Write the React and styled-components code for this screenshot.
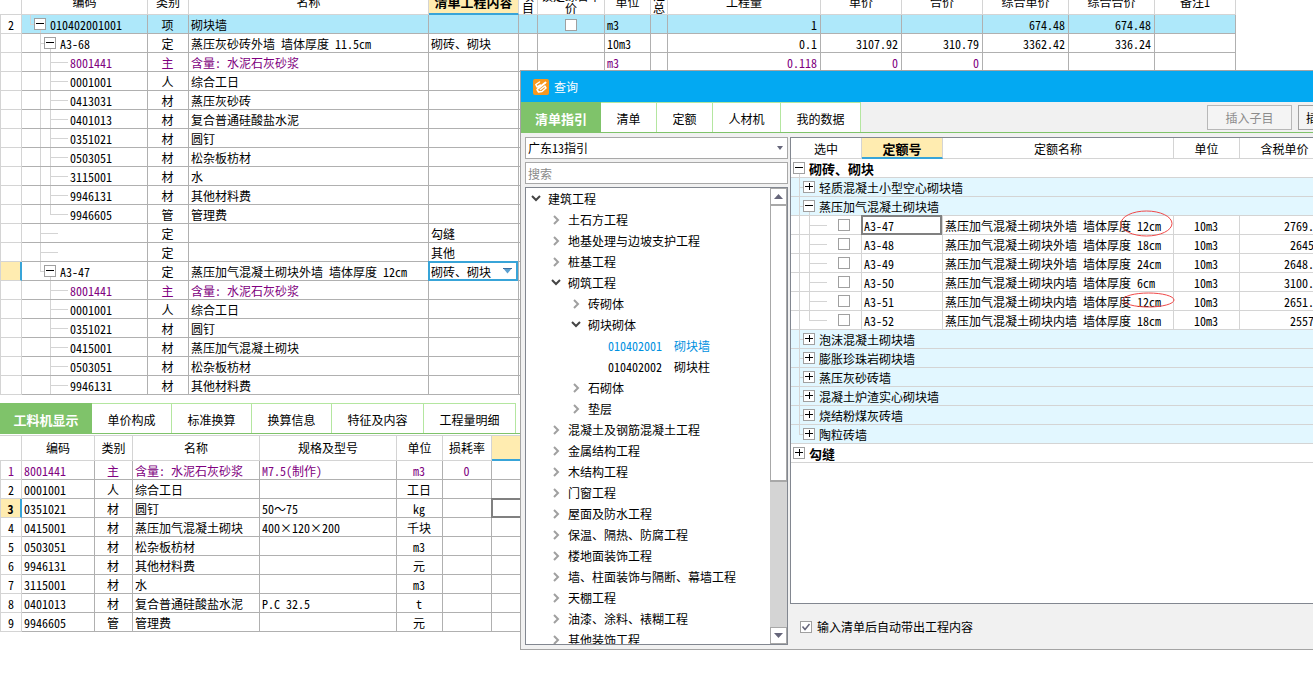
import React from "react";
import styled, { createGlobalStyle, css } from "styled-components";

const GlobalStyle = createGlobalStyle`
  * { box-sizing: border-box; }
  body {
    margin: 0;
    background: #fff;
    color: #000;
    font: 12px/18px "Noto Sans Mono CJK SC", "Noto Sans CJK SC", sans-serif;
  }
  button, input, select { font: inherit; color: inherit; margin: 0; border-radius: 0; }
  ul { list-style: none; margin: 0; padding: 0; }
`;

const C = {
  line: "#b0b0b0",
  soft: "#d4d4d4",
  frame: "#828790",
  purple: "#800080",
  green: "#7fc36a",
  lightGreen: "#b4e6a0",
  accent: "#38a4d8",
  yellow: "#ffecb0",
  selected: "#aee8fa",
};

const Page = styled.main`
  position: relative;
  min-height: 100vh;
  overflow: hidden;
`;

/* ---------- grids ---------- */

const Scroller = styled.div`
  overflow: hidden;
`;

const Grid = styled.table`
  table-layout: fixed;
  border-collapse: separate;
  border-spacing: 0;
  width: ${(p) => (p.$fill ? "100%" : "0")};
  margin-top: ${(p) => p.$scrolled || 0}px;
`;

const Th = styled.th`
  height: ${(p) => p.$h}px;
  padding: ${(p) => p.$top || 0}px 0 0;
  font-weight: ${(p) => (p.$active ? 700 : 400)};
  font-size: ${(p) => (p.$active ? 13 : 12)}px;
  line-height: 12px;
  text-align: center;
  white-space: pre;
  background: ${(p) => (p.$active ? C.yellow : "#fff")};
  border-right: 1px solid ${C.soft};
  border-bottom: ${(p) => (p.$active ? `2px solid ${C.accent}` : `1px solid ${C.soft}`)};
`;

const Tr = styled.tr`
  color: ${(p) => (p.$purple ? C.purple : "#000")};
  background: ${(p) => p.$bg || "#fff"};
`;

const Td = styled.td`
  height: 19px;
  padding: 2px 3px 0 2px;
  overflow: ${(p) => (p.$open ? "visible" : "hidden")};
  white-space: pre;
  line-height: 16px;
  text-align: ${(p) => p.$align || "left"};
  border-right: 1px solid ${(p) => (p.$soft ? C.soft : C.line)};
  border-bottom: 1px solid ${(p) => (p.$soft ? C.soft : C.line)};
`;

const FlatTd = styled(Td)`
  padding: 0;
  overflow: visible;
`;

const TreeTd = styled(Td)`
  padding: 0;
`;

const RowNo = styled.td`
  height: 19px;
  padding: 2px 0 0;
  text-align: center;
  line-height: 16px;
  background: ${(p) => (p.$current ? C.yellow : "#fff")};
  font-weight: ${(p) => (p.$current ? 700 : 400)};
  border-left: 1px solid ${C.soft};
  border-bottom: 1px solid ${C.soft};
  border-right: ${(p) => (p.$current ? `2px solid ${C.accent}` : `1px solid ${C.soft}`)};
`;

const FocusCell = styled.div`
  height: 20px;
  margin: -1px 0 -1px -1px;
  padding: 1px 0 0 1px;
  line-height: 16px;
  border: 2px solid #808080;
`;

/* ---------- tree drawing inside cells ---------- */

const Branch = styled.div`
  display: flex;
  align-items: center;
  height: 18px;
  padding-left: ${(p) => p.$pad}px;
  font-weight: ${(p) => (p.$bold ? 700 : 400)};
  font-size: ${(p) => (p.$bold ? 13 : 12)}px;
`;

const Guide = styled.span`
  position: relative;
  flex: none;
  align-self: stretch;
  width: ${(p) => p.$w}px;
  &::before {
    content: "";
    position: absolute;
    left: 0;
    top: 0;
    height: ${(p) => (p.$kind === "end" ? 9 : 19)}px;
    border-left: ${(p) => (p.$kind === "none" ? 0 : 1)}px solid ${C.soft};
  }
  ${(p) =>
    (p.$kind === "tee" || p.$kind === "end") &&
    css`
      &::after {
        content: "";
        position: absolute;
        left: 0;
        right: 0;
        top: 9px;
        border-top: 1px solid ${C.soft};
      }
    `}
`;

const Toggle = styled.button`
  position: relative;
  flex: none;
  display: block;
  width: 12px;
  height: 12px;
  padding: 0;
  background: #fff;
  border: 1px solid #a0a0a0;
  &::before {
    content: "";
    position: absolute;
    left: 1px;
    right: 1px;
    top: 4px;
    height: 1px;
    background: #000;
  }
  &::after {
    content: "";
    position: absolute;
    ${(p) =>
      p.$open
        ? css`
            left: 5px;
            top: 11px;
            width: 1px;
            height: 4px;
            background: ${C.soft};
          `
        : css`
            left: 5px;
            top: 1px;
            width: 1px;
            height: 7px;
            background: #000;
          `}
  }
`;

const Label = styled.span`
  margin-left: ${(p) => p.$gap}px;
  padding-top: 2px;
  line-height: 16px;
  white-space: pre;
`;

const Tick = styled.input`
  appearance: none;
  display: ${(p) => (p.$center ? "block" : "inline-block")};
  flex: none;
  width: 12px;
  height: 12px;
  margin: ${(p) => (p.$center ? "0 auto" : `0 0 0 ${p.$left || 0}px`)};
  background: #fff;
  border: 1px solid #a0a0a0;
  &:checked {
    background: #fff url("data:image/svg+xml,%3Csvg xmlns='http://www.w3.org/2000/svg' viewBox='0 0 10 10'%3E%3Cpath d='M1.5 4.5l2.5 3 4.500-5.500' fill='none' stroke='%2366667a' stroke-width='1.500'/%3E%3C/svg%3E") center / 10px 10px no-repeat;
  }
`;

const CellSelectBox = styled.div`
  position: relative;
  margin: -1px 0 -1px -1px;
`;

const CellSelect = styled.select`
  appearance: none;
  display: block;
  width: 100%;
  height: 20px;
  padding: 1px 0 0 1px;
  line-height: 15px;
  background: #fff;
  border: 2px solid ${C.accent};
`;

const DropMark = styled.svg`
  position: absolute;
  right: ${(p) => p.$right}px;
  top: ${(p) => p.$top}px;
  pointer-events: none;
`;

/* ---------- tabs ---------- */

const TabBar = styled.div`
  display: flex;
  height: 31px;
  background: ${(p) => p.$bg || "#fff"};
  border-bottom: 1px solid ${C.green};
`;

const Tab = styled.button`
  flex: none;
  width: ${(p) => p.$w}px;
  padding: 2px 0 0;
  background: ${(p) => (p.$active ? C.green : "#fff")};
  color: ${(p) => (p.$active ? "#fff" : "#000")};
  font-size: ${(p) => (p.$active ? 13 : 12)}px;
  font-weight: ${(p) => (p.$active ? 700 : 400)};
  border: 0 solid ${(p) => (p.$active ? C.green : C.lightGreen)};
  border-width: 1px ${(p) => (p.$active ? 0 : 1)}px 0 0;
`;

/* ---------- lower panel ---------- */

const Lower = styled.section`
  margin-top: 8px;
`;

const LowerGrid = styled.div`
  margin-top: 1px;
  border-top: 1px solid ${C.soft};
`;

/* ---------- query window ---------- */

const Window = styled.section`
  position: absolute;
  left: 520px;
  right: 0;
  top: 70px;
  height: 580px;
  display: flex;
  flex-direction: column;
  overflow: hidden;
  background: #f1f1f1;
  border: 1px solid #a4a4a4;
  border-right: 0;
`;

const TitleBar = styled.header`
  display: flex;
  align-items: center;
  gap: 5px;
  flex: none;
  height: 31px;
  padding-left: 12px;
  background: #03a9f2;
  color: #fff;
`;

const Title = styled.h1`
  margin: 0;
  font-size: 12px;
  font-weight: 400;
`;

const Actions = styled.div`
  display: flex;
  align-items: center;
  gap: 6px;
  width: 106px;
  margin-left: auto;
  padding-top: 1px;
`;

const Action = styled.button`
  flex: none;
  width: ${(p) => p.$w}px;
  height: 25px;
  padding: 0;
  background: #f4f4f4;
  color: ${(p) => (p.disabled ? "#8c8c8c" : "#000")};
  border: 1px solid ${(p) => (p.disabled ? "#b8b8b8" : "#a0a0a0")};
`;

const Body = styled.div`
  flex: 1;
  min-height: 0;
  display: grid;
  grid-template-columns: 263px minmax(0, 1fr);
  gap: 2px;
  padding: 4px 0 4px 4px;
`;

const Side = styled.div`
  display: flex;
  flex-direction: column;
  gap: 3px;
  min-height: 0;
`;

const GuideSelectBox = styled.div`
  position: relative;
`;

const GuideSelect = styled.select`
  appearance: none;
  display: block;
  width: 100%;
  height: 22px;
  padding: 0 2px;
  background: #fff;
  border: 1px solid #a8a8a8;
`;

const Search = styled.input`
  display: block;
  width: 100%;
  height: 22px;
  padding: 0 2px;
  background: #fff;
  border: 1px solid #a8a8a8;
  &::placeholder { color: #8a8a8a; opacity: 1; }
`;

const TreeBox = styled.div`
  flex: 1;
  min-height: 0;
  display: flex;
  background: #fff;
  border: 1px solid ${C.frame};
`;

const TreeList = styled.ul`
  flex: 1;
  overflow: hidden;
`;

const TreeItem = styled.li`
  display: flex;
  align-items: center;
  gap: 6px;
  height: 21px;
  padding-left: ${(p) => 4 + p.$level * 20}px;
  color: ${(p) => (p.$selected ? "#0090e0" : "#000")};
  white-space: pre;
`;

const ScrollBar = styled.div`
  flex: none;
  display: flex;
  flex-direction: column;
  width: 17px;
  background: #d4d4d4;
`;

const ScrollButton = styled.button`
  display: flex;
  align-items: center;
  justify-content: center;
  height: 17px;
  padding: 0;
  background: #fff;
  border: 1px solid #a8a8a8;
`;

const Thumb = styled.div`
  flex: none;
  height: 277px;
  margin-bottom: auto;
  background: #fff;
  border: 1px solid #a8a8a8;
  border-bottom-width: 2px;
`;

const Main = styled.div`
  display: flex;
  flex-direction: column;
  min-width: 0;
`;

const Sheet = styled.div`
  flex: 1;
  overflow: hidden;
  background: #fff;
  border: 1px solid ${C.frame};
  border-right: 0;
`;

const Footer = styled.label`
  display: flex;
  align-items: center;
  gap: 5px;
  height: 41px;
  padding: 5px 0 0 10px;
`;

const Marked = styled.span`
  position: relative;
`;

const Ring = styled.svg`
  position: absolute;
  left: ${(p) => p.$left}px;
  top: ${(p) => p.$top}px;
  overflow: visible;
  pointer-events: none;
`;

/* ---------- data ---------- */

const L3 = (kind, outer = "line") => [[outer, 10], [kind, 18]];

const items = [
  { no: "2", code: "010402001001", pad: 8, guides: [["end", 4]], open: true, type: "项", name: "砌块墙", check: true, unit: "m3", nums: ["1", "", "", "674.48", "674.48"], bg: C.selected },
  { code: "A3-68", pad: 18, guides: [["tee", 4]], open: true, type: "定", name: "蒸压灰砂砖外墙 墙体厚度 11.5cm", content: "砌砖、砌块", unit: "10m3", nums: ["0.1", "3107.92", "310.79", "3362.42", "336.24"] },
  { code: "8001441", type: "主", name: "含量: 水泥石灰砂浆", unit: "m3", nums: ["0.118", "0", "0"], purple: true },
  { code: "0001001", type: "人", name: "综合工日" },
  { code: "0413031", type: "材", name: "蒸压灰砂砖" },
  { code: "0401013", type: "材", name: "复合普通硅酸盐水泥" },
  { code: "0351021", type: "材", name: "圆钉" },
  { code: "0503051", type: "材", name: "松杂板枋材" },
  { code: "3115001", type: "材", name: "水" },
  { code: "9946131", type: "材", name: "其他材料费" },
  { code: "9946605", guides: L3("end"), type: "管", name: "管理费" },
  { code: "", guides: [["tee", 18]], type: "定", name: "", content: "勾缝" },
  { code: "", guides: [["tee", 18]], type: "定", name: "", content: "其他" },
  { code: "A3-47", pad: 18, guides: [["end", 4]], open: true, type: "定", name: "蒸压加气混凝土砌块外墙 墙体厚度 12cm", content: "砌砖、砌块", current: true },
  { code: "8001441", guides: L3("tee", "none"), type: "主", name: "含量: 水泥石灰砂浆", purple: true },
  { code: "0001001", guides: L3("tee", "none"), type: "人", name: "综合工日" },
  { code: "0351021", guides: L3("tee", "none"), type: "材", name: "圆钉" },
  { code: "0415001", guides: L3("tee", "none"), type: "材", name: "蒸压加气混凝土砌块" },
  { code: "0503051", guides: L3("tee", "none"), type: "材", name: "松杂板枋材" },
  { code: "9946131", guides: L3("tee", "none"), type: "材", name: "其他材料费" },
];

const itemCols = [
  ["", 22], ["编码", 126], ["类别", 41], ["名称", 240], ["清单工程内容", 90],
  ["项\n目", 19], ["锁定综合单\n价", 67], ["单位", 46], ["汇\n总", 17], ["工程量", 153],
  ["单价", 81], ["合价", 81], ["综合单价", 86], ["综合合价", 86], ["备注1", 81],
];

const resources = [
  ["8001441", "主", "含量: 水泥石灰砂浆", "M7.5(制作)", "m3", "0"],
  ["0001001", "人", "综合工日", "", "工日", ""],
  ["0351021", "材", "圆钉", "50～75", "kg", ""],
  ["0415001", "材", "蒸压加气混凝土砌块", "400×120×200", "千块", ""],
  ["0503051", "材", "松杂板枋材", "", "m3", ""],
  ["9946131", "材", "其他材料费", "", "元", ""],
  ["3115001", "材", "水", "", "m3", ""],
  ["0401013", "材", "复合普通硅酸盐水泥", "P.C 32.5", "t", ""],
  ["9946605", "管", "管理费", "", "元", ""],
];

const resourceCols = [
  ["", 22], ["编码", 73], ["类别", 38], ["名称", 127], ["规格及型号", 137], ["单位", 46], ["损耗率", 49], ["", null],
];

const tree = [
  [0, "建筑工程", "open"],
  [1, "土石方工程"],
  [1, "地基处理与边坡支护工程"],
  [1, "桩基工程"],
  [1, "砌筑工程", "open"],
  [2, "砖砌体"],
  [2, "砌块砌体", "open"],
  [3, "010402001  砌块墙", "leaf", true],
  [3, "010402002  砌块柱", "leaf"],
  [2, "石砌体"],
  [2, "垫层"],
  [1, "混凝土及钢筋混凝土工程"],
  [1, "金属结构工程"],
  [1, "木结构工程"],
  [1, "门窗工程"],
  [1, "屋面及防水工程"],
  [1, "保温、隔热、防腐工程"],
  [1, "楼地面装饰工程"],
  [1, "墙、柱面装饰与隔断、幕墙工程"],
  [1, "天棚工程"],
  [1, "油漆、涂料、裱糊工程"],
  [1, "其他装饰工程"],
];

const quotaCols = [["选中", 71], ["定额号", 81], ["定额名称", 231], ["单位", 66], ["含税单价", 90]];

const quotas = [
  ["A3-47", "蒸压加气混凝土砌块外墙 墙体厚度 ", "12cm", "2769.24", { left: -16, top: -6, w: 51, h: 25 }],
  ["A3-48", "蒸压加气混凝土砌块外墙 墙体厚度 ", "18cm", "2645.1"],
  ["A3-49", "蒸压加气混凝土砌块外墙 墙体厚度 ", "24cm", "2648.32"],
  ["A3-50", "蒸压加气混凝土砌块内墙 墙体厚度 ", "6cm", "3100.45"],
  ["A3-51", "蒸压加气混凝土砌块内墙 墙体厚度 ", "12cm", "2651.18", { left: -14, top: 0, w: 51, h: 14 }],
  ["A3-52", "蒸压加气混凝土砌块内墙 墙体厚度 ", "18cm", "2557.6"],
];

const closedGroups = ["泡沫混凝土砌块墙", "膨胀珍珠岩砌块墙", "蒸压灰砂砖墙", "混凝土炉渣实心砌块墙", "烧结粉煤灰砖墙", "陶粒砖墙"];

/* ---------- pieces ---------- */

const Cols = ({ cols }) => (
  <colgroup>
    {cols.map(([, w], i) => (
      <col key={i} style={w ? { width: w } : undefined} />
    ))}
  </colgroup>
);

const ItemGrid = () => (
  <Scroller>
    <Grid $scrolled={-10}>
      <Cols cols={itemCols} />
      <thead>
        <tr>
          {itemCols.map(([t], i) => (
            <Th key={i} $h={25} $active={i === 4}>{t}</Th>
          ))}
        </tr>
      </thead>
      <tbody>
        {items.map((r, i) => {
          const nums = r.nums || [];
          const guides = r.guides || L3("tee");
          return (
            <Tr key={i} $bg={r.bg} $purple={r.purple}>
              <RowNo $current={r.current}>{r.no}</RowNo>
              <TreeTd>
                <Branch $pad={r.pad || 18}>
                  {guides.map(([kind, w], g) => <Guide key={g} $kind={kind} $w={w} />)}
                  {r.open && <Toggle $open aria-label={"收起 " + r.code} />}
                  <Label $gap={r.open ? 4 : 2}>{r.code}</Label>
                </Branch>
              </TreeTd>
              <Td $align="center">{r.type}</Td>
              <Td>{r.name}</Td>
              {r.current ? (
                <FlatTd>
                  <CellSelectBox>
                    <CellSelect aria-label="清单工程内容" defaultValue={r.content}>
                      <option>{r.content}</option>
                      <option>勾缝</option>
                      <option>其他</option>
                    </CellSelect>
                    <DropMark $right={6} $top={7} width="9" height="6" viewBox="0 0 9 6">
                      <path d="M0 0h9L4.500 5.500z" fill="#5a9fd0" />
                      <path d="M0 0h9v1H0z" fill="#3a6ea0" />
                    </DropMark>
                  </CellSelectBox>
                </FlatTd>
              ) : (
                <Td>{r.content}</Td>
              )}
              <Td />
              <Td>{r.check && <Tick type="checkbox" $center aria-label="锁定综合单价" />}</Td>
              <Td>{r.unit}</Td>
              <Td />
              {[0, 1, 2, 3, 4].map((n) => <Td key={n} $align="right">{nums[n]}</Td>)}
              <Td />
            </Tr>
          );
        })}
      </tbody>
    </Grid>
  </Scroller>
);

const ResourceGrid = () => (
  <LowerGrid>
    <Grid $fill>
      <Cols cols={resourceCols} />
      <thead>
        <tr>
          {resourceCols.map(([t], i) => (
            <Th key={i} $h={25} $active={i === 7}>{t}</Th>
          ))}
        </tr>
      </thead>
      <tbody>
        {resources.map(([code, type, name, spec, unit, loss], i) => (
          <Tr key={i} $purple={i === 0}>
            <RowNo $current={i === 2}>{i + 1}</RowNo>
            <Td>{code}</Td>
            <Td $align="center">{type}</Td>
            <Td>{name}</Td>
            <Td>{spec}</Td>
            <Td $align="center">{unit}</Td>
            <Td $align="center">{loss}</Td>
            <FlatTd>{i === 2 && <FocusCell />}</FlatTd>
          </Tr>
        ))}
      </tbody>
    </Grid>
  </LowerGrid>
);

const Tabs = ({ tabs, bg, children }) => (
  <TabBar $bg={bg}>
    {tabs.map(([t, w], i) => (
      <Tab key={t} $w={w} $active={i === 0}>{t}</Tab>
    ))}
    {children}
  </TabBar>
);

const Chevron = ({ state }) => {
  if (state === "leaf") return <svg width="12" height="12" aria-hidden="true" />;
  return (
    <svg width="12" height="12" viewBox="0 0 12 12" fill="none" strokeWidth="2" aria-hidden="true">
      {state === "open" ? <path d="M2 3l4 4 4-4" stroke="#444" /> : <path d="M4 2l4 4-4 4" stroke="#a0a0a0" />}
    </svg>
  );
};

const GroupRow = ({ title, top, open, last }) => (
  <Tr $bg={top ? "#fff" : "#e2f7ff"}>
    <TreeTd $soft colSpan={5}>
      <Branch $pad={top ? 2 : 8} $bold={top}>
        {!top && <Guide $kind={last ? "end" : "tee"} $w={4} />}
        <Toggle $open={open} aria-label={(open ? "收起 " : "展开 ") + title} />
        <Label $gap={4}>{title}</Label>
      </Branch>
    </TreeTd>
  </Tr>
);

const QuotaGrid = () => (
  <Grid>
    <Cols cols={quotaCols} />
    <thead>
      <tr>
        {quotaCols.map(([t], i) => (
          <Th key={i} $h={21} $top={2} $active={i === 1}>{t}</Th>
        ))}
      </tr>
    </thead>
    <tbody>
      <GroupRow top open title="砌砖、砌块" />
      <GroupRow title="轻质混凝土小型空心砌块墙" />
      <GroupRow open title="蒸压加气混凝土砌块墙" />
      {quotas.map(([code, name, size, price, ring], i) => (
        <Tr key={code}>
          <TreeTd $soft>
            <Branch $pad={8}>
              <Guide $kind="line" $w={10} />
              <Guide $kind={i === 5 ? "end" : "tee"} $w={18} />
              <Tick type="checkbox" $left={11} aria-label={code} />
            </Branch>
          </TreeTd>
          {i === 0 ? <FlatTd $soft><FocusCell>{code}</FocusCell></FlatTd> : <Td $soft>{code}</Td>}
          <Td $soft $open={!!ring}>
            {name}
            <Marked>
              {size}
              {ring && (
                <Ring $left={ring.left} $top={ring.top} width={ring.w} height={ring.h}>
                  <ellipse cx={ring.w / 2} cy={ring.h / 2} rx={ring.w / 2} ry={ring.h / 2} fill="none" stroke="#f04848" />
                </Ring>
              )}
            </Marked>
          </Td>
          <Td $soft $align="center">10m3</Td>
          <Td $soft $align="right">{price}</Td>
        </Tr>
      ))}
      {closedGroups.map((t, i) => (
        <GroupRow key={t} title={t} last={i === closedGroups.length - 1} />
      ))}
      <GroupRow top title="勾缝" />
    </tbody>
  </Grid>
);

const AppLogo = () => (
  <svg width="16" height="16" viewBox="0 0 16 16" aria-hidden="true">
    <rect width="16" height="16" rx="2" fill="#f8981d" />
    <g fill="none" stroke="#fff" strokeLinecap="round" strokeLinejoin="round">
      <path d="M6.500 3L2.800 5.500 4 8l3.500-2" strokeWidth="1.500" />
      <path d="M5 9.500L12.500 3.500" strokeWidth="2" />
      <path d="M4 10.500l1.500 2.500 3.500-.5L13 9l-1-2-4.500 3.500" strokeWidth="1.500" />
    </g>
  </svg>
);

const Triangle = ({ up }) => (
  <svg width="9" height="5" viewBox="0 0 9 5" aria-hidden="true">
    <path d={up ? "M0 5h9L4.500 0z" : "M0 0h9L4.500 5z"} fill="#66667a" />
  </svg>
);

const QueryWindow = () => (
  <Window role="dialog" aria-label="查询">
    <TitleBar>
      <AppLogo />
      <Title>查询</Title>
    </TitleBar>
    <Tabs bg="#f1f1f1" tabs={[["清单指引", 80], ["清单", 56], ["定额", 56], ["人材机", 68], ["我的数据", 80]]}>
      <Actions>
        <Action $w={85} disabled>插入子目</Action>
        <Action $w={64}>插入清单</Action>
      </Actions>
    </Tabs>
    <Body>
      <Side>
        <GuideSelectBox>
          <GuideSelect aria-label="指引"><option>广东13指引</option></GuideSelect>
          <DropMark $right={5} $top={9} width="6" height="4" viewBox="0 0 6 4">
            <path d="M0 0h6L3 4z" fill="#66667a" />
          </DropMark>
        </GuideSelectBox>
        <Search placeholder="搜索" aria-label="搜索" />
        <TreeBox>
          <TreeList>
            {tree.map(([level, text, state, selected]) => (
              <TreeItem key={text} $level={level} $selected={selected}>
                <Chevron state={state} />
                <span>{text}</span>
              </TreeItem>
            ))}
          </TreeList>
          <ScrollBar>
            <ScrollButton aria-label="向上"><Triangle up /></ScrollButton>
            <Thumb />
            <ScrollButton aria-label="向下"><Triangle /></ScrollButton>
          </ScrollBar>
        </TreeBox>
      </Side>
      <Main>
        <Sheet><QuotaGrid /></Sheet>
        <Footer>
          <Tick type="checkbox" defaultChecked />
          输入清单后自动带出工程内容
        </Footer>
      </Main>
    </Body>
  </Window>
);

export default function App() {
  return (
    <>
      <GlobalStyle />
      <Page>
        <ItemGrid />
        <Lower>
          <Tabs tabs={[["工料机显示", 92], ["单价构成", 80], ["标准换算", 80], ["换算信息", 80], ["特征及内容", 92], ["工程量明细", 92]]} />
          <ResourceGrid />
        </Lower>
        <QueryWindow />
      </Page>
    </>
  );
}
